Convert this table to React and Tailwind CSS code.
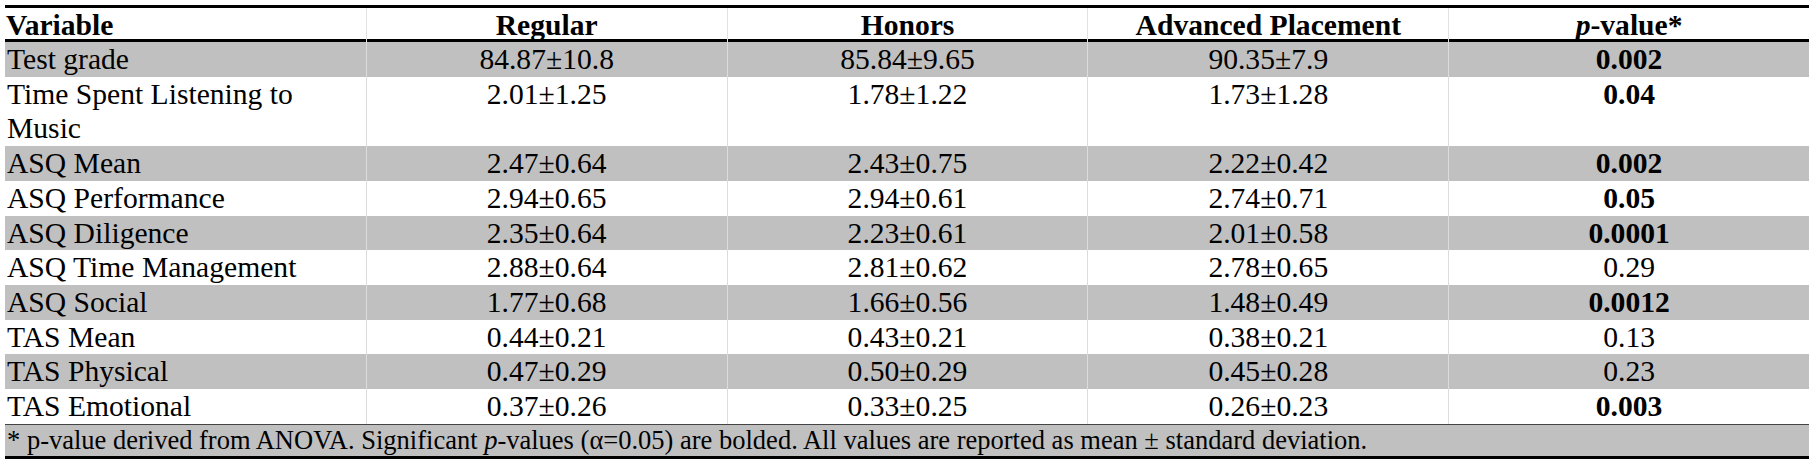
import React from "react";

const rows = [
  ["Test grade", "84.87±10.8", "85.84±9.65", "90.35±7.9", "0.002", true],
  ["Time Spent Listening to Music", "2.01±1.25", "1.78±1.22", "1.73±1.28", "0.04", true],
  ["ASQ Mean", "2.47±0.64", "2.43±0.75", "2.22±0.42", "0.002", true],
  ["ASQ Performance", "2.94±0.65", "2.94±0.61", "2.74±0.71", "0.05", true],
  ["ASQ Diligence", "2.35±0.64", "2.23±0.61", "2.01±0.58", "0.0001", true],
  ["ASQ Time Management", "2.88±0.64", "2.81±0.62", "2.78±0.65", "0.29", false],
  ["ASQ Social", "1.77±0.68", "1.66±0.56", "1.48±0.49", "0.0012", true],
  ["TAS Mean", "0.44±0.21", "0.43±0.21", "0.38±0.21", "0.13", false],
  ["TAS Physical", "0.47±0.29", "0.50±0.29", "0.45±0.28", "0.23", false],
  ["TAS Emotional", "0.37±0.26", "0.33±0.25", "0.26±0.23", "0.003", true],
];

const App = () => {
  return (
    <div className="font-serif w-[1818px] h-[472px] bg-white pt-[5px] pl-[5px] text-black">
      <div className="font-['Liberation_Serif'] w-[1804px] border-t-[3px] border-black">
        {/* Header */}
        <div className="grid grid-cols-5 h-[34px] border-b-[3px] border-black text-[29.6px] leading-[34px] font-bold">
          <div className="pl-[1px]">Variable</div>
          <div className="text-center border-l border-[#e2e2e2]">Regular</div>
          <div className="text-center border-l border-[#e2e2e2]">Honors</div>
          <div className="text-center border-l border-[#e2e2e2]">Advanced Placement</div>
          <div className="text-center border-l border-[#e2e2e2]">
            <span className="italic">p</span>-value*
          </div>
        </div>

        {/* Body */}
        {rows.map(([name, reg, hon, ap, p, sig], i) => (
          <div
            key={name}
            className={`grid grid-cols-5 text-[29.6px] leading-[34.7px] ${
              i % 2 === 0 ? "bg-[#c0c0c0]" : "bg-white"
            }`}
          >
            <div className="pl-[2px]">
              {name === "Time Spent Listening to Music" ? (
                <>
                  Time Spent Listening to
                  <br />
                  Music
                </>
              ) : (
                name
              )}
            </div>
            <div className="text-center border-l border-[#dcdcdc]">{reg}</div>
            <div className="text-center border-l border-[#dcdcdc]">{hon}</div>
            <div className="text-center border-l border-[#dcdcdc]">{ap}</div>
            <div className={`text-center border-l border-[#dcdcdc] ${sig ? "font-bold" : ""}`}>
              {p}
            </div>
          </div>
        ))}

        {/* Footnote */}
        <div className="h-[35px] border-t border-[#444] border-b-[3px] border-b-black bg-[#c0c0c0] pl-[2px] text-[26.5px] leading-[31px]">
          * p-value derived from ANOVA. Significant <span className="italic">p</span>-values (α=0.05) are bolded. All values are
          reported as mean ± standard deviation.
        </div>
      </div>
    </div>
  );
};

export default App;
